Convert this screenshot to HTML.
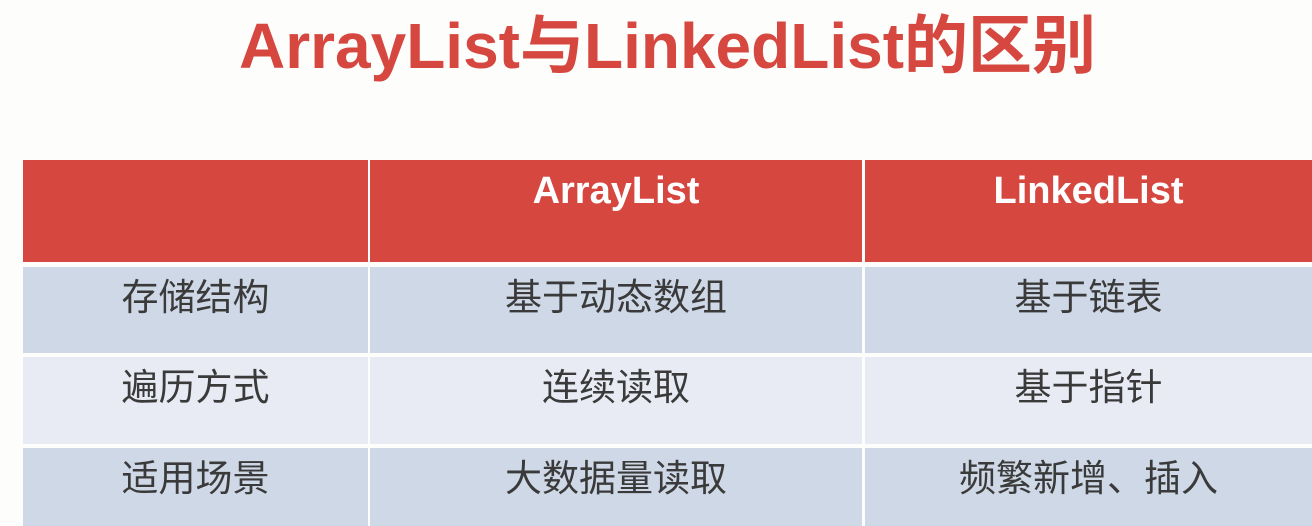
<!DOCTYPE html>
<html><head><meta charset="utf-8"><style>
body{margin:0;width:1312px;height:526px;background:#fdfdfc;overflow:hidden;position:relative;font-family:"Liberation Sans","Noto Sans CJK SC",sans-serif}
.t{position:absolute;left:0;width:1335px;top:1px;text-align:center;color:#d5473f;font-weight:bold;font-size:64px;letter-spacing:0px;line-height:90px}
.c{position:absolute;text-align:center;box-sizing:border-box}
.h{background:#d5473f;color:#fff;font-weight:bold;font-size:38px;top:160px;height:102px;padding-top:1px;line-height:60px}
.r{font-size:37px;color:#3a3a3a;line-height:62px}
.a{background:#cfd8e7}.b{background:#e8ebf4}
</style></head><body>
<div class="t">ArrayList与LinkedList的区别</div>
<div class="c h" style="left:23px;width:345px"></div>
<div class="c h" style="left:370px;width:492px">ArrayList</div>
<div class="c h" style="left:865px;width:447px">LinkedList</div>

<div class="c r a" style="left:23px;width:345px;top:267px;height:86px">存储结构</div>
<div class="c r a" style="left:370px;width:492px;top:267px;height:86px">基于动态数组</div>
<div class="c r a" style="left:865px;width:447px;top:267px;height:86px">基于链表</div>

<div class="c r b" style="left:23px;width:345px;top:357px;height:87px">遍历方式</div>
<div class="c r b" style="left:370px;width:492px;top:357px;height:87px">连续读取</div>
<div class="c r b" style="left:865px;width:447px;top:357px;height:87px">基于指针</div>

<div class="c r a" style="left:23px;width:345px;top:448px;height:78px">适用场景</div>
<div class="c r a" style="left:370px;width:492px;top:448px;height:78px">大数据量读取</div>
<div class="c r a" style="left:865px;width:447px;top:448px;height:78px">频繁新增、插入</div>
</body></html>
